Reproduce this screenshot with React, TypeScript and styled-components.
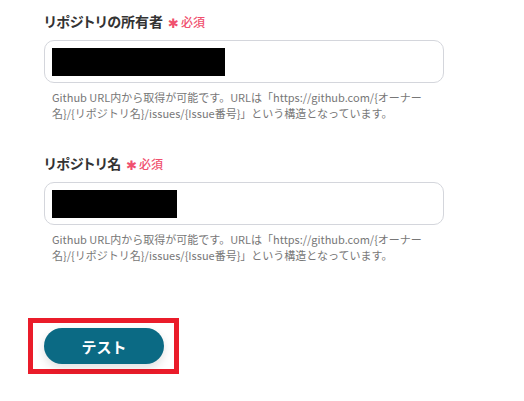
import React from "react";
import styled, { createGlobalStyle } from "styled-components";

const Global = createGlobalStyle`
  html, body { margin: 0; padding: 0; background: #fff; }
  body { font-family: "Noto Sans CJK JP", "Noto Sans", sans-serif; }
`;

const Page = styled.div`
  width: 524px;
  height: 401px;
  box-sizing: border-box;
  padding: 10px 0 0 44px;
  display: flex;
  flex-direction: column;
`;

const Field = styled.div<{ gap: number }>`
  display: flex;
  flex-direction: column;
  width: 400px;
  margin-bottom: ${(p) => p.gap}px;
`;

const Label = styled.div`
  display: flex;
  align-items: center;
  gap: 5px;
  height: 22px;
  font-size: 14px;
  font-weight: 700;
  color: #333;
  margin-bottom: 8px;
  font-feature-settings: "palt";
`;

const Required = styled.span`
  color: #f0506e;
  font-size: 12px;
  font-weight: 500;
  display: flex;
  align-items: center;
  gap: 2px;
`;

const Star = styled.span`
  font-family: "DejaVu Sans", sans-serif;
  font-size: 13px;
  line-height: 1;
  position: relative;
  top: 2px;
`;

const InputBox = styled.div`
  box-sizing: border-box;
  height: 43px;
  border: 1px solid #d4d6dc;
  border-radius: 10px;
  padding: 8px 7px;
  display: flex;
  align-items: center;
`;

const Masked = styled.div<{ w: number }>`
  width: ${(p) => p.w}px;
  height: 28px;
  background: #000;
`;

const Help = styled.div`
  margin-top: 6px;
  padding-left: 8px;
  font-size: 11px;
  line-height: 16px;
  color: #777;
`;

const Highlight = styled.div`
  margin-left: -16px;
  width: 151px;
  height: 56px;
  box-sizing: border-box;
  border: 5px solid #ea1c2a;
  display: flex;
  align-items: center;
  padding-left: 11px;
`;

const Button = styled.button`
  width: 120px;
  height: 36px;
  border: none;
  border-radius: 18px;
  background: #0b6a84;
  color: #fff;
  font-family: "Noto Sans CJK JP", sans-serif;
  font-size: 15px;
  font-weight: 700;
  box-shadow: 0 4px 10px rgba(0, 0, 0, 0.12);
  cursor: pointer;
`;

const help =
  "Github URL内から取得が可能です。URLは「https://github.com/{オーナー名}/{リポジトリ名}/issues/{Issue番号}」という構造となっています。";

export default function App() {
  return (
    <>
      <Global />
      <Page>
        <Field gap={31}>
          <Label>
            リポジトリの所有者
            <Required>
              <Star>✱</Star>必須
            </Required>
          </Label>
          <InputBox>
            <Masked w={173} />
          </InputBox>
          <Help>{help}</Help>
        </Field>
        <Field gap={55}>
          <Label>
            リポジトリ名
            <Required>
              <Star>✱</Star>必須
            </Required>
          </Label>
          <InputBox>
            <Masked w={125} />
          </InputBox>
          <Help>{help}</Help>
        </Field>
        <Highlight>
          <Button>テスト</Button>
        </Highlight>
      </Page>
    </>
  );
}
